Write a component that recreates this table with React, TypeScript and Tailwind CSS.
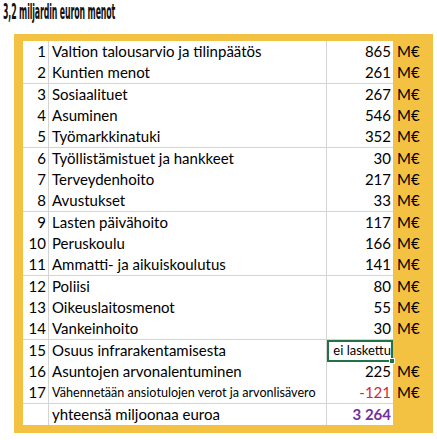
import { FC } from 'react';

interface Row {
  no?: number;
  label: string;
  value: string;
  small?: boolean;
  tone?: 'red' | 'purple' | 'note';
  unit?: boolean;
}

const rows: Row[] = [
  { no: 1, label: 'Valtion talousarvio ja tilinpäätös', value: '865', unit: true },
  { no: 2, label: 'Kuntien menot', value: '261', unit: true },
  { no: 3, label: 'Sosiaalituet', value: '267', unit: true },
  { no: 4, label: 'Asuminen', value: '546', unit: true },
  { no: 5, label: 'Työmarkkinatuki', value: '352', unit: true },
  { no: 6, label: 'Työllistämistuet ja hankkeet', value: '30', unit: true },
  { no: 7, label: 'Terveydenhoito', value: '217', unit: true },
  { no: 8, label: 'Avustukset', value: '33', unit: true },
  { no: 9, label: 'Lasten päivähoito', value: '117', unit: true },
  { no: 10, label: 'Peruskoulu', value: '166', unit: true },
  { no: 11, label: 'Ammatti- ja aikuiskoulutus', value: '141', unit: true },
  { no: 12, label: 'Poliisi', value: '80', unit: true },
  { no: 13, label: 'Oikeuslaitosmenot', value: '55', unit: true },
  { no: 14, label: 'Vankeinhoito', value: '30', unit: true },
  { no: 15, label: 'Osuus infrarakentamisesta', value: 'ei laskettu', tone: 'note' },
  { no: 16, label: 'Asuntojen arvonalentuminen', value: '225', unit: true },
  { no: 17, label: 'Vähennetään ansiotulojen verot ja arvonlisävero', value: '-121', small: true, tone: 'red', unit: true },
  { label: 'yhteensä miljoonaa euroa', value: '3 264', tone: 'purple' },
];

const TableRow: FC<{ row: Row; last: boolean }> = ({ row, last }) => {
  const line = last ? '' : 'border-b border-[#d4d4d4]';
  return (
    <div className="grid h-[21.33px] grid-cols-[26px_278px_66px_1fr]">
      <div className={`${line} border-r border-[#d4d4d4] bg-white pr-[2px] text-right leading-[21px]`}>{row.no}</div>
      <div
        className={`${line} border-r border-[#d4d4d4] bg-white pl-[3px] whitespace-nowrap leading-[21px] ${
          row.small ? 'text-[12.6px]' : ''
        }`}>
        {row.label}
      </div>
      {row.tone === 'note' ? (
        <div className="relative border-2 border-[#217346] bg-white text-right text-[13px] whitespace-nowrap leading-[17px]">
          {row.value}
          <span className="absolute -right-[4px] -bottom-[4px] h-[6px] w-[6px] border border-white bg-[#217346]" />
        </div>
      ) : (
        <div
          className={`${line} bg-white pr-[2px] text-right leading-[21px] ${
            row.tone === 'red' ? 'text-[#d42a32]' : row.tone === 'purple' ? 'font-bold text-[#7030a0]' : ''
          }`}>
          {row.value}
        </div>
      )}
      <div className="pl-[4px] leading-[21px]">{row.unit ? 'M€' : ''}</div>
    </div>
  );
};

export default function App() {
  return (
    <div className="h-[440px] w-[437px] bg-white">
      <div className="h-[24px] w-[160px] overflow-visible pl-[3px]">
        <h1
          className="w-[330px] origin-left scale-x-[0.415] text-[21px] font-bold font-stretch-condensed leading-[24px] tracking-[-0.3px] whitespace-nowrap text-[#111]"
          style={{ fontFamily: '"DejaVu Sans", "Liberation Sans", sans-serif' }}>
          3,2 miljardin euron menot
        </h1>
      </div>
      <div className="mt-[10px] ml-[14px] w-[419px] bg-[#f4c242] pt-[7px] pb-[8px] pl-[9px]">
        <div className="text-[15px] text-black" style={{ fontFamily: 'Lato, "Open Sans", sans-serif' }}>
          {rows.map((r, i) => (
            <TableRow key={i} row={r} last={i === rows.length - 1} />
          ))}
        </div>
      </div>
    </div>
  );
}
